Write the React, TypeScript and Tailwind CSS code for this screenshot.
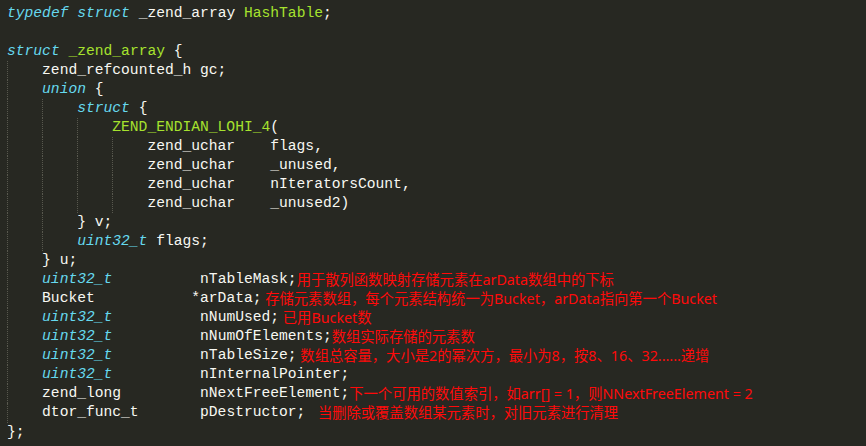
import type { ReactNode } from "react";

type Tok = { t: string; c?: "kw" | "fn" | "cm" };

const kw = (t: string): Tok => ({ t, c: "kw" });
const fn = (t: string): Tok => ({ t, c: "fn" });
const cm = (t: string): Tok => ({ t, c: "cm" });
const tx = (t: string): Tok => ({ t });

// indent level + tokens per line
const lines: [number, Tok[]][] = [
  [0, [kw("typedef"), tx(" "), kw("struct"), tx(" _zend_array "), fn("HashTable"), tx(";")]],
  [0, []],
  [0, [kw("struct"), tx(" "), fn("_zend_array"), tx(" {")]],
  [1, [tx("zend_refcounted_h gc;")]],
  [1, [kw("union"), tx(" {")]],
  [2, [kw("struct"), tx(" {")]],
  [3, [fn("ZEND_ENDIAN_LOHI_4"), tx("(")]],
  [4, [tx("zend_uchar    flags,")]],
  [4, [tx("zend_uchar    _unused,")]],
  [4, [tx("zend_uchar    nIteratorsCount,")]],
  [4, [tx("zend_uchar    _unused2)")]],
  [2, [tx("} v;")]],
  [2, [kw("uint32_t"), tx(" flags;")]],
  [1, [tx("} u;")]],
  [1, [kw("uint32_t"), tx("          nTableMask;"), cm("用于散列函数映射存储元素在arData数组中的下标")]],
  [1, [tx("Bucket           *arData;"), cm(" 存储元素数组，每个元素结构统一为Bucket，arData指向第一个Bucket")]],
  [1, [kw("uint32_t"), tx("          nNumUsed;"), cm(" 已用Bucket数")]],
  [1, [kw("uint32_t"), tx("          nNumOfElements;"), cm("数组实际存储的元素数")]],
  [1, [kw("uint32_t"), tx("          nTableSize;"), cm(" 数组总容量，大小是2的幂次方，最小为8，按8、16、32......递增")]],
  [1, [kw("uint32_t"), tx("          nInternalPointer;")]],
  [1, [tx("zend_long         nNextFreeElement;"), cm("下一个可用的数值索引，如arr[] = 1，则NNextFreeElement = 2")]],
  [1, [tx("dtor_func_t       pDestructor; "), cm(" 当删除或覆盖数组某元素时，对旧元素进行清理")]],
  [0, [tx("};")]],
];

function Token({ tok }: { tok: Tok }): ReactNode {
  if (tok.c === "kw") return <span className="italic text-[#66d9ef]">{tok.t}</span>;
  if (tok.c === "fn") return <span className="text-[#a6e22e]">{tok.t}</span>;
  if (tok.c === "cm")
    return (
      <span className="text-[14.3px] text-[#ff0a0a] [font-family:'Noto_Sans','Noto_Sans_CJK_SC',sans-serif]">
        {tok.t}
      </span>
    );
  return <span>{tok.t}</span>;
}

export default function App() {
  return (
    <div className="h-[446px] w-[866px] overflow-hidden bg-[#272822] pl-[7px] pt-[3.5px] text-[14.63px] text-[#f8f8f2] [font-family:'Liberation_Mono',monospace]">
      {lines.map(([indent, toks], i) => (
        <div key={i} className="flex h-[19.05px] items-center whitespace-pre leading-[19.05px]">
          {Array.from({ length: indent }).map((_, j) => (
            <span
              key={j}
              className="h-full w-[4ch] shrink-0 border-l border-dotted border-[#58584e]"
            />
          ))}
          {toks.map((tok, k) => (
            <Token key={k} tok={tok} />
          ))}
        </div>
      ))}
    </div>
  );
}
